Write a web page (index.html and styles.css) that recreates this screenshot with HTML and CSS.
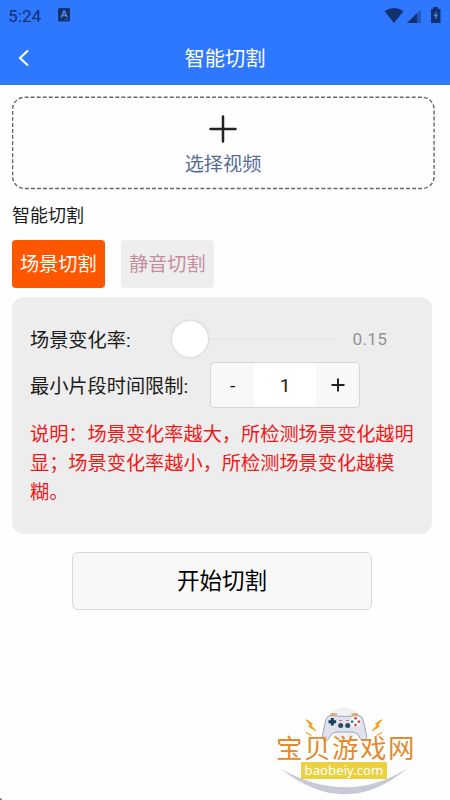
FILE: index.html
```html
<!DOCTYPE html>
<html lang="zh-CN">
<head>
<meta charset="utf-8">
<meta name="viewport" content="width=device-width, initial-scale=1">
<title>智能切割</title>
<link rel="stylesheet" href="styles.css">
</head>
<body>
<header class="header">
  <div class="status">
    <span class="time">5:24</span>
    <svg class="app-icon" width="12" height="14" viewBox="0 0 12 14"><rect width="12" height="13.5" rx="1.3" fill="#12316f"/><path d="M3.2 9.5 5.9 3h.6l2.6 6.5M4.3 7.5h3.8" fill="none" stroke="#4f86e8" stroke-width="1.5"/><path d="M6 11.8h5" stroke="#2b5cba" stroke-width=".8"/></svg>
    <svg class="signals" width="58" height="18" viewBox="0 0 58 18"><path d="M.5 5.2Q10 -1.2 19.5 5.2L10 17Z" fill="#12316f"/><path d="M37 3.2V17H23Z" fill="#2558b8"/><path d="M33 7.2V17H23Z" fill="#12316f"/><path d="M49 1h5v2h2.5v14h-9.500V3H49Z" fill="#12316f"/><path d="M53 5l-3.400 5h1.900l-.8 4 3.500-5.200h-2Z" fill="#4d86e9"/></svg>
  </div>
  <div class="navbar">
    <svg class="back" width="12" height="18" viewBox="0 0 12 18"><path d="M10 1.500 2 9l8 7.500" fill="none" stroke="#fff" stroke-width="2.100"/></svg>
    <h1 class="title">智能切割</h1>
  </div>
</header>
<main class="content">
  <section class="upload">
    <svg class="outline" width="424" height="94" viewBox="0 0 424 94"><rect x=".6" y="1.300" width="421.500" height="91.200" rx="12" fill="none" stroke="#666" stroke-width="1.400" stroke-dasharray="3.900 2.150"/></svg>
    <svg class="plus" width="28" height="28" viewBox="0 0 28 28"><path d="M1.500 14h25M14 1.500v25" stroke="#222" stroke-width="2.500" stroke-linecap="round"/></svg>
    <span class="upload-label">选择视频</span>
  </section>
  <h2 class="section-title">智能切割</h2>
  <div class="tabs">
    <div class="tab active">场景切割</div>
    <div class="tab">静音切割</div>
  </div>
  <section class="panel">
    <div class="row">
      <span>场景变化率:</span>
      <div class="slider"><i class="thumb"></i></div>
      <span class="rate">0.15</span>
    </div>
    <div class="row row-stepper">
      <span>最小片段时间限制:</span>
      <div class="stepper"><span class="step">-</span><span class="count">1</span><span class="step"><svg width="14" height="14" viewBox="0 0 14 14"><path d="M.5 7h13M7 .5v13" stroke="#222" stroke-width="2"/></svg></span></div>
    </div>
    <p class="note">说明：场景变化率越大，所检测场景变化越明显；场景变化率越小，所检测场景变化越模糊。</p>
  </section>
  <div class="start">开始切割</div>
</main>
<div class="watermark">
  <svg class="mark-art" width="150" height="95" viewBox="0 0 150 95">
    <circle cx="72" cy="22" r="16.500" fill="#f1f1f3"/>
    <path d="M9 67Q74 118 136 66Q76 104 9 67Z" fill="#c7c9d7"/>
    <path d="M58.500 12.300h6.500M79.500 12.300h6.500" stroke="#eda34c" stroke-width="2"/>
    <path d="M58 13.500Q72 15.500 87 13.500Q91 14.500 91.500 19L94.500 33Q95 39 91 39Q89 39 86 33Q84.500 30 80 30H65Q60.500 30 59 33Q56 39 54 39Q50 39 50.500 33L53.500 19Q54 14.500 58 13.500Z" fill="#dfe1eb" stroke="#a4a6b8"/>
    <path d="M56.500 19.700h7.600M60.300 15.900v7.600" stroke="#173f59" stroke-width="3"/>
    <circle cx="83.500" cy="19.700" r="5.400" fill="#f8f8fb"/>
    <g fill="#e84343"><circle cx="83.500" cy="16.300" r="1.400"/><circle cx="83.500" cy="23.100" r="1.400"/><circle cx="86.900" cy="19.700" r="1.400"/></g>
    <circle cx="80.100" cy="19.700" r="1.400" fill="#2684ad"/>
    <path d="M67 18.500h3M74 18.500h3" stroke="#e06870"/>
    <circle cx="68.700" cy="23.500" r="2.500" fill="#294b60"/><circle cx="75.700" cy="23.500" r="2.500" fill="#294b60"/>
    <path d="m34.500 18 5.500 3.500-1 2.500 4.500 4.500-6.500-4 1-2.500Zm-.5 12.500 5.500 3m70-15.500-5.500 3.500 1 2.500-4.500 4.500 6.500-4-1-2.500Zm.5 12.500-5.500 3" fill="#efb529" stroke="#efaa22" stroke-width="1.300" stroke-linejoin="round"/>
  </svg>
  <div class="mark-name">宝贝游戏网</div>
  <div class="mark-url">baobeiy.com</div>
</div>
<i class="corner"></i>
</body>
</html>
```
FILE: styles.css
```css
* { box-sizing: border-box; }
body {
  margin: 0;
  height: 800px;
  overflow: hidden;
  position: relative;
  background: #fefefe;
  color: #1b1b1b;
  font-family: Roboto, "Noto Sans CJK SC", sans-serif;
}
h1, h2, p { margin: 0; font-weight: 400; }
svg { display: block; flex: none; }
.header { height: 85px; background: #2e78ff; }
.status { height: 31px; display: flex; align-items: center; padding: 0 7px 0 8px; }
.time { width: 50px; padding-top: 1px; font-size: 17.3px; line-height: 31px; color: #12316f; }
.app-icon { margin-top: -1px; }
.signals { margin: -2px 1px 0 auto; }
.navbar { height: 54px; display: grid; grid-template-columns: 40px 1fr 40px; align-items: center; }
.back { margin-left: 18px; }
.title { padding-top: 2px; color: #fff; font-size: 20.3px; line-height: 30px; text-align: center; }
.content { padding: 11px 18px 0 12px; }
.upload {
  position: relative;
  width: 422px;
  height: 94px;
  display: flex;
  flex-direction: column;
  align-items: center;
  padding-top: 19px;
}
.outline { position: absolute; left: 0; top: 0; }
.upload-label { margin-top: 7px; color: #576b95; font-size: 19.2px; line-height: 29px; }
.section-title { margin-top: 12px; font-size: 18px; line-height: 27px; }
.tabs { display: flex; gap: 16.5px; margin-top: 11px; }
.tab {
  width: 92.5px;
  height: 48px;
  border-radius: 4px;
  background: #eee;
  color: #c48d9c;
  font-size: 19.2px;
  line-height: 49px;
  text-align: center;
}
.tab.active { background: #ff5600; color: #fff; }
.panel {
  height: 237px;
  margin-top: 9px;
  padding: 24px 18px 0;
  border-radius: 12px;
  background: #ededed;
  font-size: 19.2px;
}
.row { height: 36px; display: flex; align-items: center; }
.slider { width: 164px; height: 2px; margin: 0 17px 0 41px; background: #e8e8e8; display: flex; align-items: center; }
.thumb { width: 36px; height: 36px; flex: none; border-radius: 50%; background: #fff; box-shadow: 0 0 3px rgba(0,0,0,.18); }
.rate { color: #929292; font-size: 17.3px; letter-spacing: .2px; }
.row-stepper { height: 46px; margin-top: 5px; }
.stepper {
  width: 150px;
  height: 46px;
  margin-left: 22px;
  display: grid;
  grid-template-columns: 43px 1fr 43px;
  border: 1px solid #d6d6d6;
  border-radius: 4px;
  background: #f8f8f8;
  overflow: hidden;
}
.step, .count { display: flex; align-items: center; justify-content: center; font-size: 19.2px; }
.count { background: #fff; }
.note { margin-top: 13px; color: #f01919; line-height: 28.8px; }
.start {
  width: 300px;
  height: 58px;
  margin: 18px 0 0 60px;
  border: 1px solid #d9d9d9;
  border-radius: 6px;
  background: #f8f8f8;
  font-size: 22.5px;
  line-height: 57px;
  text-align: center;
  color: #000;
}
.watermark { position: absolute; left: 272px; top: 702px; width: 150px; height: 95px; padding: 32px 0 0 4px; }
.mark-art { position: absolute; left: 0; top: 0; }
.mark-name { position: relative; height: 28px; font: 26.500px/26px "Noto Sans CJK SC", sans-serif; letter-spacing: 1.5px; color: #e38a2c; white-space: nowrap; }
.mark-url {
  position: relative;
  width: 86px;
  height: 17px;
  margin-left: 25px;
  background: #ead13e;
  color: #fff;
  font: 400 13.2px/16px "Noto Sans", sans-serif;
  text-align: center;
}
.corner { position: absolute; left: 0; bottom: 0; width: 2px; height: 2px; background: #777; border-radius: 0 2px 0 0; }
```
